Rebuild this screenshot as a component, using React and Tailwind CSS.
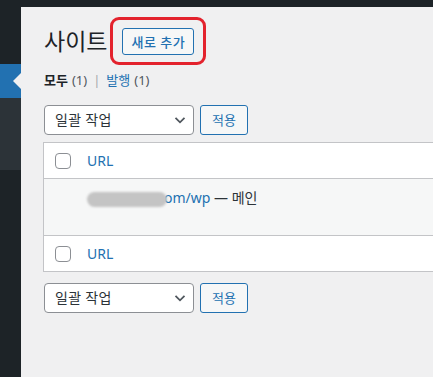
export default function App() {
  const Checkbox = () => (
    <span className="block w-[16px] h-[16px] rounded-[4px] border border-[#8c8f94] bg-white shrink-0" />
  );
  const Chevron = () => (
    <svg width="14" height="14" viewBox="0 0 14 14" className="shrink-0">
      <path d="M2.5 4.8 L7 9.3 L11.5 4.8" fill="none" stroke="#50575e" strokeWidth="1.8" />
    </svg>
  );
  const BulkBar = ({ className }) => (
    <div className={`flex items-center gap-[6px] ${className}`}>
      <div className="w-[150px] h-[30px] rounded-[4px] border border-[#8c8f94] bg-white flex items-center pl-[10px] pr-[6px] justify-between">
        <span className="text-[14px] leading-[20px] text-[#2c3338] tracking-[0.3px]">일괄 작업</span>
        <Chevron />
      </div>
      <button className="w-[48px] h-[30px] rounded-[3px] border border-[#2271b1] bg-[#f6f7f7] text-[#2271b1] text-[13px] leading-[20px] flex items-center justify-center">
        적용
      </button>
    </div>
  );
  return (
    <div className="w-[433px] h-[377px] overflow-hidden bg-[#f0f0f1] font-['Noto_Sans','Noto_Sans_CJK_KR',sans-serif]">
      <div className="h-[7px] bg-[#1d2327]" />
      <div className="flex h-[370px]">
        <aside className="w-[21px] flex flex-col shrink-0">
          <div className="h-[57px] bg-[#1d2327]" />
          <div className="h-[34px] bg-[#2271b1] relative">
            <span className="absolute right-0 top-[9px] w-0 h-0 border-y-[8px] border-y-transparent border-r-[8px] border-r-[#f0f0f1]" />
          </div>
          <div className="h-[72px] bg-[#2c3338]" />
          <div className="flex-1 bg-[#1d2327]" />
        </aside>
        <main className="flex-1 pl-[22px] pt-[20px] min-w-0">
          <div className="flex items-center h-[29px]">
            <h1 className="text-[23px] leading-[29px] font-normal text-[#1d2327] ml-[1px]">사이트</h1>
            <div className="relative ml-[15px]">
              <span className="absolute left-[-12px] right-[-12px] top-[-11px] bottom-[-10px] border-[3px] border-[#e3222d] rounded-[9px]" />
              <button className="h-[27px] px-[8px] rounded-[3px] border border-[#2271b1] bg-[#f6f7f7] text-[#2271b1] text-[13px] leading-[20px] font-medium tracking-[0.5px]">
                새로 추가
              </button>
            </div>
          </div>
          <div className="mt-[16px] text-[13px] leading-[17px] flex items-center ml-[1px]">
            <span className="font-bold text-[#1d2327]">모두</span>
            <span className="text-[#50575e] ml-[4px]">(1)</span>
            <span className="text-[#a7aaad] mx-[6px]">|</span>
            <span className="text-[#2271b1]">발행</span>
            <span className="text-[#50575e] ml-[4px]">(1)</span>
          </div>
          <BulkBar className="mt-[16px] ml-[1px]" />
          <div className="mt-[7px] w-[420px] border border-[#c3c4c7] bg-white">
            <div className="h-[36px] flex items-center pl-[11px] border-b border-[#c3c4c7]">
              <Checkbox />
              <span className="ml-[16px] text-[14px] leading-[20px] text-[#2271b1]">URL</span>
            </div>
            <div className="h-[57px] bg-[#f6f7f7] border-b border-[#c3c4c7] pl-[43px] pt-[9px]">
              <div className="flex items-center text-[14px] leading-[20px]">
                <span className="relative z-10 inline-block w-[80px] h-[15px] rounded-full bg-[#c4c4c4] blur-[1px] mt-[2px]" />
                <span className="text-[#2271b1] -ml-[3px]">om/wp</span>
                <span className="text-[#2c3338]">&nbsp;— 메인</span>
              </div>
            </div>
            <div className="h-[35px] flex items-center pl-[11px]">
              <Checkbox />
              <span className="ml-[16px] text-[14px] leading-[20px] text-[#2271b1]">URL</span>
            </div>
          </div>
          <BulkBar className="mt-[11px] ml-[1px]" />
        </main>
      </div>
    </div>
  );
}
